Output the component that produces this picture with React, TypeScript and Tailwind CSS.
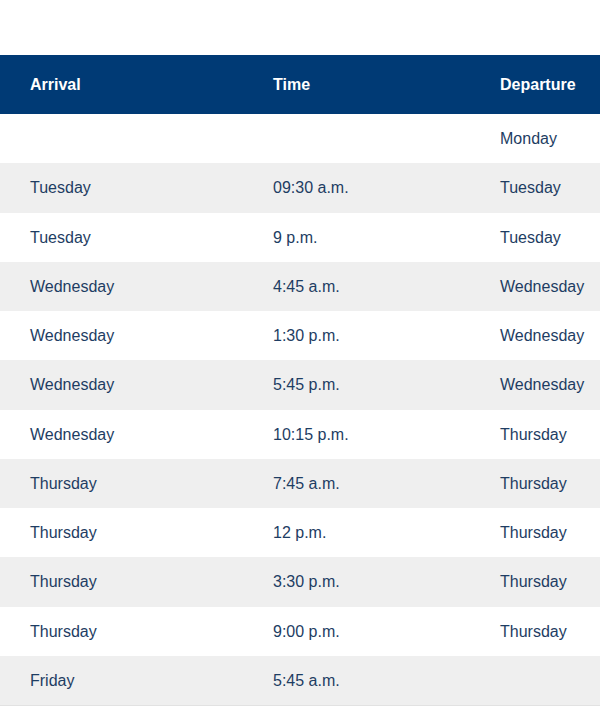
const rows = [
  ["", "", "Monday"],
  ["Tuesday", "09:30 a.m.", "Tuesday"],
  ["Tuesday", "9 p.m.", "Tuesday"],
  ["Wednesday", "4:45 a.m.", "Wednesday"],
  ["Wednesday", "1:30 p.m.", "Wednesday"],
  ["Wednesday", "5:45 p.m.", "Wednesday"],
  ["Wednesday", "10:15 p.m.", "Thursday"],
  ["Thursday", "7:45 a.m.", "Thursday"],
  ["Thursday", "12 p.m.", "Thursday"],
  ["Thursday", "3:30 p.m.", "Thursday"],
  ["Thursday", "9:00 p.m.", "Thursday"],
  ["Friday", "5:45 a.m.", ""],
];

export default function App() {
  return (
    <main className="min-h-screen bg-white pt-[55px] font-['Liberation_Sans',Arial,sans-serif] text-[16px]">
      {/* HEADER */}
      <div className="grid h-[59px] grid-cols-[243px_227px_1fr] items-center bg-[#003a75] pt-[1px] font-bold text-white">
        <div className="pl-[30px]">Arrival</div>
        <div className="pl-[30px]">Time</div>
        <div className="pl-[30px]">Departure</div>
      </div>

      {/* ROWS */}
      <div className="border-b border-[#e2e2e2]">
        {rows.map((row, index) => (
          <div
            key={index}
            className={`grid h-[49.25px] grid-cols-[243px_227px_1fr] items-center pt-[1px] text-[#1e3d63] ${
              index % 2 === 1 ? "bg-[#efefef]" : "bg-white"
            }`}
          >
            <div className="pl-[30px]">{row[0]}</div>
            <div className="pl-[30px]">{row[1]}</div>
            <div className="pl-[30px]">{row[2]}</div>
          </div>
        ))}
      </div>
    </main>
  );
}
